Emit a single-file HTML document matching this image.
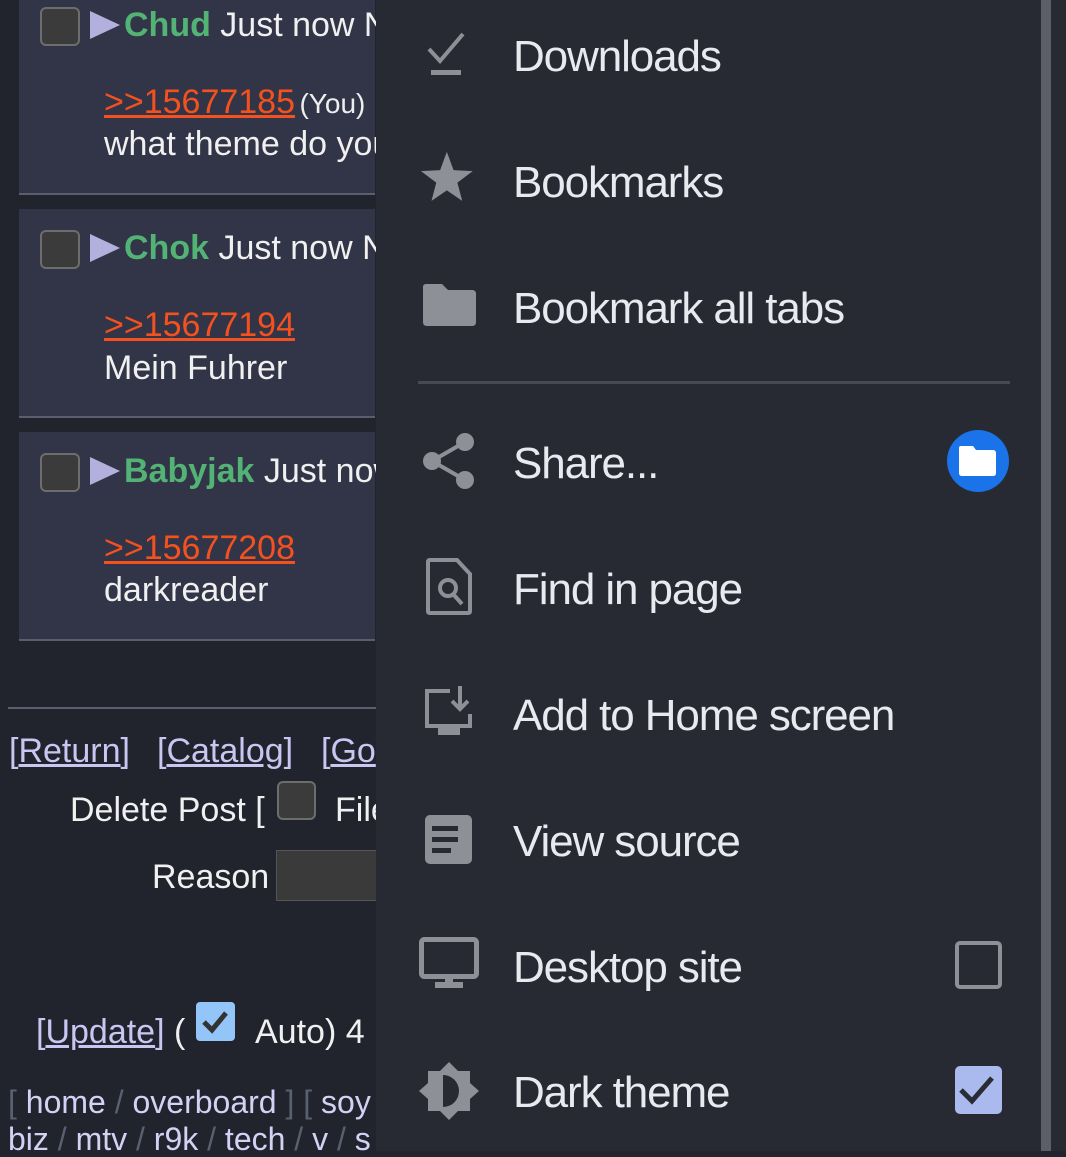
<!DOCTYPE html>
<html><head><meta charset="utf-8"><style>
*{margin:0;padding:0;box-sizing:border-box}
body{width:1066px;height:1151px;overflow:hidden;background:#21242d;font-family:"Liberation Sans",sans-serif;position:relative}
.a{position:absolute;white-space:nowrap;line-height:1}
.post{position:absolute;left:19px;width:356px;background:#323547;border-bottom:2px solid #5a5e6e}
.cb{position:absolute;width:40px;height:39px;background:#3b3b3b;border:2px solid #6d6d6d;border-radius:6px}
.tri{position:absolute;width:0;height:0;border-left:30px solid #b3b0dd;border-top:14px solid transparent;border-bottom:14px solid transparent}
.p{font-size:34px;color:#f0f0f0}
.nm{color:#53b375;font-weight:bold}
.lk{font-size:34px;color:#f4511e;text-decoration:underline}
.pl{color:#c9c6f2;text-decoration:underline}
.br{color:#c9c6f2}
.menu{position:absolute;left:376px;top:0;width:690px;height:1151px;background:#282a33}
.mt{position:absolute;left:513px;font-size:44px;color:#e9e9f0;line-height:1;white-space:nowrap;letter-spacing:-1.1px}
.ic{position:absolute}
</style></head><body>

<div class="post" style="top:-10px;height:205px"></div>
<div class="post" style="top:209px;height:209px"></div>
<div class="post" style="top:432px;height:209px"></div>

<div class="cb" style="left:40px;top:7px"></div><div class="tri" style="left:90px;top:11px"></div>
<div class="a p" style="left:124px;top:8px"><span class="nm">Chud</span> Just now N</div>
<div class="a" style="left:104px;top:85px"><span class="lk">&gt;&gt;15677185</span> <span style="font-size:28px;color:#eee">(You)</span></div>
<div class="a p" style="left:104px;top:127px">what theme do you</div>

<div class="cb" style="left:40px;top:230px"></div><div class="tri" style="left:90px;top:234px"></div>
<div class="a p" style="left:124px;top:231px"><span class="nm">Chok</span> Just now N</div>
<div class="a lk" style="left:104px;top:308px">&gt;&gt;15677194</div>
<div class="a p" style="left:104px;top:351px">Mein Fuhrer</div>

<div class="cb" style="left:40px;top:453px"></div><div class="tri" style="left:90px;top:457px"></div>
<div class="a p" style="left:124px;top:454px"><span class="nm">Babyjak</span> Just now</div>
<div class="a lk" style="left:104px;top:531px">&gt;&gt;15677208</div>
<div class="a p" style="left:104px;top:573px">darkreader</div>

<div style="position:absolute;left:8px;top:707px;width:370px;height:2px;background:#5a5e6e"></div>
<div class="a p" style="left:9px;top:734px"><span class="br">[</span><span class="pl">Return</span><span class="br">]</span></div>
<div class="a p" style="left:157px;top:734px"><span class="br">[</span><span class="pl">Catalog</span><span class="br">]</span></div>
<div class="a p" style="left:321px;top:734px"><span class="br">[</span><span class="pl">Go</span></div>
<div class="a p" style="left:70px;top:793px">Delete Post [</div>
<div class="cb" style="left:277px;top:781px;width:39px;height:39px"></div>
<div class="a p" style="left:335px;top:793px">File</div>
<div class="a p" style="left:152px;top:860px">Reason</div>
<div style="position:absolute;left:276px;top:850px;width:110px;height:51px;background:#3a3a3a;border:1px solid #555"></div>
<div class="a p" style="left:36px;top:1015px"><span class="br">[</span><span class="pl">Update</span><span class="br">]</span> (</div>
<div style="position:absolute;left:196px;top:1002px;width:39px;height:39px;background:#93c5f9;border-radius:4px"></div>
<svg class="ic" style="left:196px;top:1002px" width="39" height="39"><path d="M8 20 L16 28 L30 11" fill="none" stroke="#333" stroke-width="5"/></svg>
<div class="a p" style="left:255px;top:1015px">Auto) 4</div>
<div class="a" style="left:8px;top:1086px;font-size:32px;color:#d4d1f5"><span style="color:#5a6070">[</span> home <span style="color:#5a6070">/</span> overboard <span style="color:#5a6070">] [</span> soy <span style="color:#5a6070">/</span></div>
<div class="a" style="left:8px;top:1123px;font-size:32px;color:#d4d1f5">biz <span style="color:#5a6070">/</span> mtv <span style="color:#5a6070">/</span> r9k <span style="color:#5a6070">/</span> tech <span style="color:#5a6070">/</span> v <span style="color:#5a6070">/</span> s</div>

<div class="menu"></div>
<div style="position:absolute;left:1041px;top:0;width:10px;height:1151px;background:#5c5f68"></div>

<svg class="ic" style="left:420px;top:30px" width="60" height="50"><path d="M9 19 L20 31 L43 4" fill="none" stroke="#8e9097" stroke-width="4"/><rect x="11" y="40" width="30" height="5" fill="#8e9097"/></svg>
<div class="mt" style="top:35px">Downloads</div>

<svg class="ic" style="left:420px;top:150px" width="60" height="55"><polygon points="29,2 36,21 56,22 40,34 45,53 29,42 13,53 18,34 2,22 22,21" fill="#8e9097" transform="translate(-1,0) scale(0.96)"/></svg>
<div class="mt" style="top:161px">Bookmarks</div>

<svg class="ic" style="left:420px;top:282px" width="60" height="50"><path d="M6 2 H22 L28 8 H52 Q56 8 56 12 V40 Q56 44 52 44 H7 Q3 44 3 40 V5 Q3 2 6 2Z" fill="#8e9097"/></svg>
<div class="mt" style="top:287px">Bookmark all tabs</div>

<div style="position:absolute;left:418px;top:381px;width:592px;height:3px;background:#474a53"></div>

<svg class="ic" style="left:420px;top:430px" width="60" height="60"><g fill="#8e9097"><circle cx="45" cy="12" r="9"/><circle cx="12" cy="31" r="9"/><circle cx="45" cy="50" r="9"/></g><path d="M45 12 L12 31 L45 50" stroke="#8e9097" stroke-width="4" fill="none"/></svg>
<div class="mt" style="top:442px">Share...</div>
<div style="position:absolute;left:947px;top:430px;width:62px;height:62px;border-radius:50%;background:#1a73e8"></div>
<svg class="ic" style="left:958px;top:443px" width="40" height="36"><path d="M3 3 H15 L18 7 H35 Q38 7 38 10 V30 Q38 33 35 33 H4 Q1 33 1 30 V5 Q1 3 3 3Z" fill="#fff"/></svg>

<svg class="ic" style="left:420px;top:558px" width="60" height="60"><path d="M10 2 H37 L50 16 V53 Q50 55 48 55 H10 Q8 55 8 53 V4 Q8 2 10 2Z" fill="none" stroke="#8e9097" stroke-width="4"/><circle cx="28" cy="30" r="8" fill="none" stroke="#8e9097" stroke-width="4"/><path d="M33 36 L42 46" stroke="#8e9097" stroke-width="4"/></svg>
<div class="mt" style="top:568px">Find in page</div>

<svg class="ic" style="left:420px;top:686px" width="60" height="60"><path d="M30 5 H7 V40 H50 V28" fill="none" stroke="#8e9097" stroke-width="4"/><path d="M40 0 V22 M32 15 L40 23 L48 15" fill="none" stroke="#8e9097" stroke-width="4"/><rect x="18" y="40" width="22" height="9" fill="#8e9097"/></svg>
<div class="mt" style="top:694px">Add to Home screen</div>

<svg class="ic" style="left:420px;top:812px" width="60" height="60"><rect x="5" y="3" width="47" height="49" rx="5" fill="#8e9097"/><g fill="#282a33"><rect x="12" y="14" width="26" height="5"/><rect x="12" y="25" width="26" height="5"/><rect x="12" y="36" width="19" height="5"/></g></svg>
<div class="mt" style="top:820px">View source</div>

<svg class="ic" style="left:418px;top:936px" width="64" height="60"><rect x="3.5" y="3.5" width="55" height="37" rx="3" fill="none" stroke="#8e9097" stroke-width="5"/><rect x="27" y="40" width="8" height="8" fill="#8e9097"/><rect x="17" y="46" width="28" height="6" fill="#8e9097"/></svg>
<div class="mt" style="top:946px">Desktop site</div>
<div style="position:absolute;left:955px;top:941px;width:47px;height:48px;border:4px solid #8e9097;border-radius:5px"></div>

<svg class="ic" style="left:418px;top:1060px" width="64" height="62"><polygon points="31,2 40,11 52,11 52,23 61,31 52,39 52,51 40,51 31,60 22,51 10,51 10,39 1,31 10,23 10,11 22,11" fill="#8e9097"/><path d="M25 15 A16 16 0 0 1 25 47 Z" fill="#282a33"/></svg>
<div class="mt" style="top:1071px">Dark theme</div>
<div style="position:absolute;left:955px;top:1066px;width:47px;height:48px;background:#aabaee;border-radius:5px"></div>
<svg class="ic" style="left:955px;top:1066px" width="47" height="48"><path d="M6 24 L17 35 L37 12" fill="none" stroke="#2a2c35" stroke-width="5"/></svg>

</body></html>
